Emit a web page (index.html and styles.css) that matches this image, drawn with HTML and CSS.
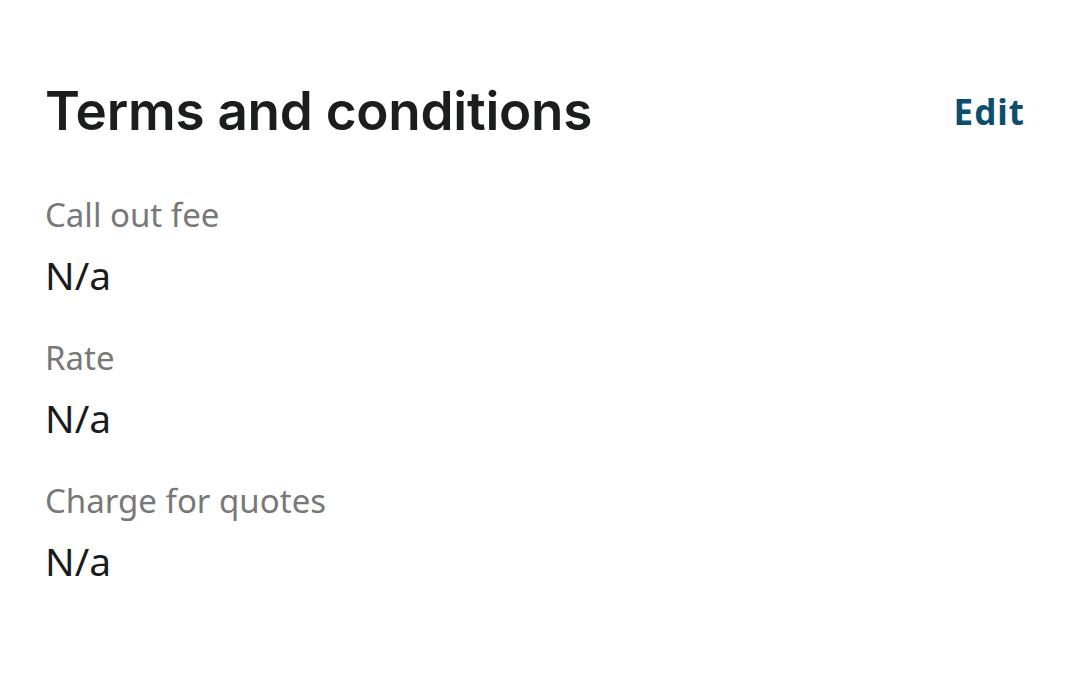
FILE: index.html
```html
<!DOCTYPE html>
<html>
<head>
<meta charset="utf-8">
<link rel="stylesheet" href="styles.css">
</head>
<body>
<div class="page">
  <div class="header">
    <h1 class="title">Terms and conditions</h1>
    <a class="edit">Edit</a>
  </div>
  <div class="list">
    <div class="item">
      <div class="label">Call out fee</div>
      <div class="value">N/a</div>
    </div>
    <div class="item">
      <div class="label">Rate</div>
      <div class="value">N/a</div>
    </div>
    <div class="item">
      <div class="label">Charge for quotes</div>
      <div class="value">N/a</div>
    </div>
  </div>
</div>
</body>
</html>
```
FILE: styles.css
```css
html, body {
  margin: 0;
  padding: 0;
  background: #ffffff;
}
.page {
  padding: 80px 56px 0 45px;
}
.header {
  display: flex;
  justify-content: space-between;
  align-items: center;
  height: 62px;
}
.title {
  margin: 0;
  font-family: Inter, sans-serif;
  font-weight: 600;
  font-size: 53px;
  line-height: 62px;
  letter-spacing: -0.25px;
  color: #1b1d1f;
}
.edit {
  font-family: "Noto Sans", sans-serif;
  font-weight: 700;
  font-size: 35px;
  letter-spacing: 1px;
  margin-right: -1px;
  color: #0d4e6c;
}
.list {
  display: flex;
  flex-direction: column;
  margin-top: 53px;
  gap: 40px;
}
.item {
  display: flex;
  flex-direction: column;
  gap: 17px;
}
.label {
  font-family: "Noto Sans", sans-serif;
  font-size: 33px;
  line-height: 40px;
  color: #787878;
}
.value {
  font-family: "Noto Sans", sans-serif;
  font-size: 39px;
  line-height: 46px;
  color: #1b1b1b;
}
```
